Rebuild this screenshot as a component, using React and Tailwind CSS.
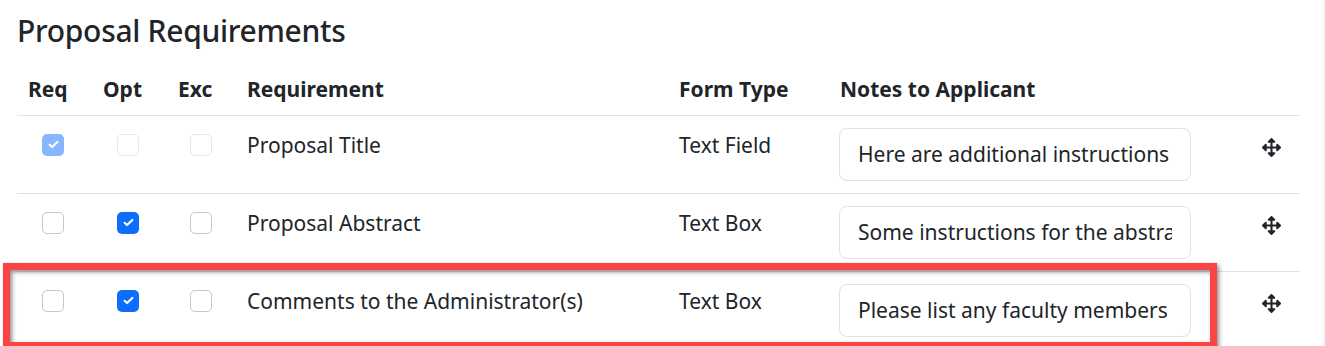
import React from "react";
import { FaArrowsAlt } from "react-icons/fa";

const rows = [
  { req: true, opt: false, exc: false, disabled: true, name: "Proposal Title", type: "Text Field", note: "Here are additional instructions" },
  { req: false, opt: true, exc: false, name: "Proposal Abstract", type: "Text Box", note: "Some instructions for the abstract section" },
  { req: false, opt: true, exc: false, name: "Comments to the Administrator(s)", type: "Text Box", note: "Please list any faculty members" },
];

function Check({ checked, disabled }) {
  if (checked) {
    return (
      <span className={"flex h-[22px] w-[22px] items-center justify-center rounded-[5px] " + (disabled ? "bg-[#86b7fe]" : "bg-[#0d6efd]")}>
        <svg width="13" height="13" viewBox="0 0 20 20" fill="none">
          <path d="M4 10.5l3.8 3.5L16 6" stroke="white" strokeWidth="3.2" strokeLinecap="round" strokeLinejoin="round" />
        </svg>
      </span>
    );
  }
  return (
    <span className={"block h-[22px] w-[22px] rounded-[5px] border bg-white " + (disabled ? "border-[#e4e6e8]" : "border-[#c4c8cc]")} />
  );
}

export default function App() {
  return (
    <div className="relative h-[346px] w-full overflow-hidden bg-white text-[#212529]" style={{ fontFamily: '"Noto Sans", "Open Sans", sans-serif' }}>
      <div className="flex">
        <div className="w-[1322px] pl-[17px] pr-[22px]">
          <h4 className="pt-[9px] text-[30px] font-medium leading-[44px] tracking-[-0.3px]">Proposal Requirements</h4>
          <table className="mt-[13px] w-full table-fixed border-collapse text-[21px]">
            <colgroup>
              <col className="w-[75px]" />
              <col className="w-[75px]" />
              <col className="w-[69px]" />
              <col className="w-[432px]" />
              <col className="w-[161px]" />
              <col className="w-[411px]" />
              <col />
            </colgroup>
            <thead>
              <tr className="border-b border-[#dee2e6]">
                {["Req", "Opt", "Exc", "Requirement", "Form Type", "Notes to Applicant", ""].map((h, i) => (
                  <th key={i} className="h-[49px] px-[11px] pb-[2px] text-left align-middle font-bold leading-[30px]">{h}</th>
                ))}
              </tr>
            </thead>
            <tbody>
              {rows.map((r, i) => (
                <tr key={i} className="h-[77px] border-b border-[#dee2e6]">
                  <td className="pl-[25px] pt-[18px] align-top"><Check checked={r.req} disabled={r.disabled} /></td>
                  <td className="pl-[25px] pt-[18px] align-top"><Check checked={r.opt} disabled={r.disabled} /></td>
                  <td className="pl-[23px] pt-[18px] align-top"><Check checked={r.exc} disabled={r.disabled} /></td>
                  <td className="px-[11px] pt-[14px] align-top leading-[30px]">{r.name}</td>
                  <td className="px-[11px] pt-[14px] align-top leading-[30px]">{r.type}</td>
                  <td className="pl-[10px] pt-[12px] pb-[12px] align-top">
                    <div className="flex h-[53px] w-[352px] items-center overflow-hidden whitespace-nowrap rounded-[8px] border border-[#dee2e6] pl-[18px] pr-[18px] pt-[2px]">
                      <span className="overflow-hidden">{r.note}</span>
                    </div>
                  </td>
                  <td className="pt-[22px] pl-[22px] align-top">
                    <FaArrowsAlt className="h-[19px] w-[19px] text-[#212529]" />
                  </td>
                </tr>
              ))}
            </tbody>
          </table>
        </div>
        <div className="h-[346px] flex-1 bg-[#f6f6f6]" />
      </div>
      <div
        className="absolute left-[3px] top-[263px] h-[86px] w-[1214px] border-[7px] border-[#fb4545]"
        style={{ filter: "drop-shadow(2px 2px 2px rgba(0,0,0,0.45))" }}
      />
    </div>
  );
}
